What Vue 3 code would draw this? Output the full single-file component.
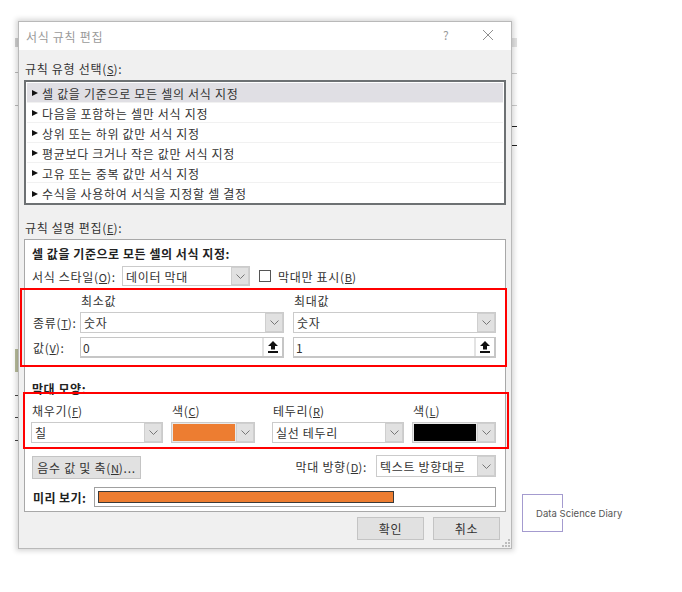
<script setup>
const rules = [
  '셀 값을 기준으로 모든 셀의 서식 지정',
  '다음을 포함하는 셀만 서식 지정',
  '상위 또는 하위 값만 서식 지정',
  '평균보다 크거나 작은 값만 서식 지정',
  '고유 또는 중복 값만 서식 지정',
  '수식을 사용하여 서식을 지정할 셀 결정'
]
const ticks = [395, 417, 440]
</script>

<template>
  <div class="page">
    <i class="bg bg-l1"></i><i class="bg bg-l2"></i><i class="bg bg-l3"></i><i class="bg bg-l4"></i>
    <i class="bg bg-r1"></i><i class="bg bg-r2"></i><i class="bg bg-r3"></i>
    <i class="bg bg-r4"></i><i class="bg bg-r5"></i>
    <i v-for="t in ticks" :key="t" class="tick" :style="{ top: t + 'px' }"></i>

    <div class="dialog">
      <header class="titlebar">
        <span class="title">서식 규칙 편집</span>
        <span class="help">?</span>
        <svg class="close" width="12" height="12" viewBox="0 0 12 12">
          <path d="M1 1 L11 11 M11 1 L1 11" stroke="#8f8f8f" stroke-width="1" fill="none" />
        </svg>
      </header>

      <main class="body">
        <div class="label first-label">규칙 유형 선택(<u>S</u>):</div>
        <ul class="rules">
          <li v-for="(r, i) in rules" :key="r" class="rule" :class="{ active: i === 0 }">
            <svg class="tri" width="6" height="6" viewBox="0 0 6 6"><path d="M0 0 L6 3 L0 6 Z" fill="#111" /></svg>
            <span class="rule-text">{{ r }}</span>
          </li>
        </ul>

        <div class="label second-label">규칙 설명 편집(<u>E</u>):</div>
        <section class="group">
          <div class="heading head-a">셀 값을 기준으로 모든 셀의 서식 지정:</div>
          <div class="style-row">
            <span class="style-label">서식 스타일(<u>O</u>):</span>
            <div class="combo style-combo">
              <span class="combo-text">데이터 막대</span>
              <span class="combo-btn"><svg width="9" height="5" viewBox="0 0 9 5"><path d="M0.5 0.5 L4.5 4.5 L8.5 0.5" fill="none" stroke="#777" /></svg></span>
            </div>
            <span class="check"></span>
            <span class="check-label">막대만 표시(<u>B</u>)</span>
          </div>

          <div class="red red-a">
            <span></span>
            <span class="field-title">최소값</span>
            <span class="field-title">최대값</span>

            <span class="field-label">종류(<u>T</u>):</span>
            <div class="combo"><span class="combo-text">숫자</span><span class="combo-btn"><svg width="9" height="5" viewBox="0 0 9 5"><path d="M0.5 0.5 L4.5 4.5 L8.5 0.5" fill="none" stroke="#777" /></svg></span></div>
            <div class="combo"><span class="combo-text">숫자</span><span class="combo-btn"><svg width="9" height="5" viewBox="0 0 9 5"><path d="M0.5 0.5 L4.5 4.5 L8.5 0.5" fill="none" stroke="#777" /></svg></span></div>

            <span class="field-label">값(<u>V</u>):</span>
            <div class="input"><span class="input-text">0</span><span class="picker"><svg width="10" height="12" viewBox="0 0 10 12"><path d="M5 0 L10 5 L7 5 L7 8.5 L3 8.5 L3 5 L0 5 Z M0 10 H10 V12 H0 Z" fill="#111" /></svg></span></div>
            <div class="input"><span class="input-text">1</span><span class="picker"><svg width="10" height="12" viewBox="0 0 10 12"><path d="M5 0 L10 5 L7 5 L7 8.5 L3 8.5 L3 5 L0 5 Z M0 10 H10 V12 H0 Z" fill="#111" /></svg></span></div>
          </div>

          <div class="heading head-b">막대 모양:</div>
          <div class="red red-b">
            <span class="bar-title">채우기(<u>F</u>)</span>
            <span class="bar-title">색(<u>C</u>)</span>
            <span class="bar-title">테두리(<u>R</u>)</span>
            <span class="bar-title">색(<u>L</u>)</span>

            <div class="combo"><span class="combo-text">칠</span><span class="combo-btn"><svg width="9" height="5" viewBox="0 0 9 5"><path d="M0.5 0.5 L4.5 4.5 L8.5 0.5" fill="none" stroke="#777" /></svg></span></div>
            <div class="combo swatch-combo"><span class="swatch orange"></span><span class="combo-btn"><svg width="9" height="5" viewBox="0 0 9 5"><path d="M0.5 0.5 L4.5 4.5 L8.5 0.5" fill="none" stroke="#777" /></svg></span></div>
            <div class="combo"><span class="combo-text">실선 테두리</span><span class="combo-btn"><svg width="9" height="5" viewBox="0 0 9 5"><path d="M0.5 0.5 L4.5 4.5 L8.5 0.5" fill="none" stroke="#777" /></svg></span></div>
            <div class="combo swatch-combo"><span class="swatch black"></span><span class="combo-btn"><svg width="9" height="5" viewBox="0 0 9 5"><path d="M0.5 0.5 L4.5 4.5 L8.5 0.5" fill="none" stroke="#777" /></svg></span></div>
          </div>

          <div class="neg-row">
            <button class="btn neg-btn">음수 값 및 축(<u>N</u>)...</button>
            <div class="dir">
              <span class="dir-label">막대 방향(<u>D</u>):</span>
              <div class="combo dir-combo"><span class="combo-text">텍스트 방향대로</span><span class="combo-btn"><svg width="9" height="5" viewBox="0 0 9 5"><path d="M0.5 0.5 L4.5 4.5 L8.5 0.5" fill="none" stroke="#777" /></svg></span></div>
            </div>
          </div>

          <div class="preview-row">
            <span class="preview-label">미리 보기:</span>
            <div class="preview"><div class="preview-bar"></div></div>
          </div>
        </section>

        <footer class="footer">
          <button class="btn foot-btn">확인</button>
          <button class="btn foot-btn">취소</button>
        </footer>
      </main>

      <svg class="grip" width="9" height="9" viewBox="0 0 9 9">
        <path d="M7 1h2v2H7zM4 4h2v2H4zM7 4h2v2H7zM1 7h2v2H1zM4 7h2v2H4zM7 7h2v2H7z" fill="#bdbdbd" />
      </svg>
    </div>

    <div class="logo">
      <span class="logo-box"></span>
      <span class="logo-text">Data Science Diary</span>
    </div>
  </div>
</template>

<style>
html, body { margin: 0; background: #fff; }
</style>

<style scoped>
.page {
  position: relative;
  width: 682px;
  height: 592px;
  overflow: hidden;
  padding: 21px 0 0 18px;
  box-sizing: border-box;
  background: #fff;
  font-family: "Noto Sans CJK KR", "Noto Sans", sans-serif;
  font-size: 12px;
  letter-spacing: 0.7px;
  color: #333;
}
.bg { position: absolute; display: block; }
.bg-l1 { left: 15px; top: 38px; width: 3px; height: 9px; background: #cfcfcf; }
.bg-l2 { left: 15px; top: 72px; width: 3px; height: 1px; background: #bbb; }
.bg-l3 { left: 15px; top: 105px; width: 3px; height: 1px; background: #bbb; }
.bg-l4 { left: 15px; top: 349px; width: 3px; height: 23px; background: #b9bd9c; }
.bg-r1 { left: 512px; top: 38px; width: 5px; height: 9px; background: #e3e3e3; }
.bg-r2 { left: 512px; top: 73px; width: 5px; height: 1px; background: #ccc; }
.bg-r3 { left: 512px; top: 105px; width: 5px; height: 1px; background: #ccc; }
.bg-r4 { left: 512px; top: 126px; width: 5px; height: 1px; background: #222; }
.bg-r5 { left: 512px; top: 145px; width: 5px; height: 1px; background: #222; }
.tick { position: absolute; left: 15px; width: 3px; height: 1px; background: #444; }

.dialog {
  position: relative;
  width: 494px;
  height: 528px;
  box-sizing: border-box;
  border: 1px solid #b9b9b9;
  background: #f0f0f0;
  box-shadow: 0 0 5px 2px rgba(0, 0, 0, 0.16);
}
.titlebar {
  position: relative;
  display: flex;
  align-items: center;
  height: 28px;
  background: #fff;
  padding-left: 7px;
}
.title { color: #9a9a9a; }
.help { position: absolute; left: 424px; top: 5px; color: #9a9a9a; line-height: 16px; }
.close { position: absolute; left: 463px; top: 7px; }

.body { display: flex; flex-direction: column; padding: 0 5px; }
.label { height: 16px; line-height: 16px; padding-left: 1px; color: #333; }
.first-label { margin-top: 11px; }
.second-label { margin-top: 15px; }
u { text-underline-offset: 1px; font-size: 11px; letter-spacing: 0; }

.rules {
  list-style: none;
  margin: 3px 0 0;
  padding: 1px;
  width: 482px;
  height: 125px;
  box-sizing: border-box;
  border: 2px solid #6d7173;
  background: #fff;
}
.rule {
  display: flex;
  align-items: center;
  gap: 4px;
  height: 20px;
  padding-left: 5px;
  box-sizing: border-box;
  border-bottom: 1px solid #f1f1f1;
}
.rule:last-child { border-bottom: 0; }
.rule.active { background: #e0dfe4; }
.rule-text { padding-top: 1px; }
.tri { flex: none; margin-top: 1px; }

.group {
  margin-top: 3px;
  width: 482px;
  height: 273px;
  box-sizing: border-box;
  border: 1px solid #a8a8a8;
  background: #fff;
  display: flex;
  flex-direction: column;
}
.heading {
  height: 16px;
  line-height: 16px;
  padding-left: 7px;
  font-weight: 700;
  color: #222;
  letter-spacing: 0.55px;
}
.head-a { margin-top: 6px; }
.head-b { margin-top: 14px; }
.style-row {
  display: flex;
  align-items: center;
  height: 20px;
  margin-top: 4px;
  padding-left: 7px;
}
.style-label { width: 90px; white-space: nowrap; }
.style-combo { width: 128px; height: 20px; }
.check {
  width: 12px;
  height: 12px;
  margin-left: 9px;
  border: 1px solid #555;
  background: #fff;
  box-sizing: border-box;
}
.check-label { margin-left: 7px; }

.combo, .input {
  display: flex;
  align-items: stretch;
  box-sizing: border-box;
  border: 1px solid #cbcbcb;
  background: #fff;
  min-width: 0;
}
.combo-text, .input-text {
  flex: 1;
  padding-left: 3px;
  display: flex;
  align-items: center;
  white-space: nowrap;
  overflow: hidden;
}
.input-text { padding-left: 2px; }
.combo-btn {
  flex: none;
  width: 16px;
  display: flex;
  align-items: center;
  justify-content: center;
  background: #e1e1e1;
  border: 1px solid #cfcfcf;
}
.input { border-right-width: 2px; border-bottom-width: 2px; border-color: #c6c6c6; }
.picker {
  flex: none;
  width: 18px;
  display: flex;
  align-items: center;
  justify-content: center;
  background: #fff;
  border-left: 2px solid #e3e3e3;
}

.red { box-sizing: border-box; border: 2px solid #f00; position: relative; }
.red-a {
  margin: 2px 0 0 -5px;
  width: 487px;
  height: 79px;
  display: grid;
  grid-template-columns: 38px 204px 203px;
  grid-template-rows: 14px 21px 21px;
  column-gap: 9px;
  row-gap: 4px;
  padding: 4px 0 0 11px;
}
.field-title { line-height: 14px; padding-left: 1px; }
.field-label { display: flex; align-items: center; white-space: nowrap; }

.red-b {
  margin: -5px 0 0 -2px;
  width: 486px;
  height: 57px;
  display: grid;
  grid-template-columns: 140px 101px 140px 84px;
  grid-template-rows: 14px 21px;
  row-gap: 4px;
  padding: 10px 0 0 6px;
}
.red-b > .combo:nth-child(5), .red-b > .combo:nth-child(7) { width: 132px; }
.red-b > .combo:nth-child(6) { width: 84px; }
.bar-title { line-height: 14px; padding-left: 1px; white-space: nowrap; }
.swatch-combo { background: #e9e9e9; }
.swatch { flex: 1; margin: 1px; }
.orange { background: #ed7d31; }
.black { background: #000; }

.neg-row {
  margin-top: 6px;
  height: 24px;
  display: flex;
  justify-content: space-between;
  padding: 0 9px 0 7px;
}
.btn {
  font: inherit;
  letter-spacing: inherit;
  color: #333;
  background: #e1e1e1;
  border: 1px solid #c4c4c4;
  padding: 0;
  box-sizing: border-box;
  white-space: nowrap;
}
.neg-btn { width: 109px; height: 23px; margin-top: 1px; }
.dir { display: flex; align-items: flex-start; gap: 9px; }
.dir-label { line-height: 24px; white-space: nowrap; }
.dir-combo { width: 120px; height: 22px; }

.preview-row {
  margin-top: 8px;
  display: flex;
  align-items: center;
  padding-left: 8px;
}
.preview-label { width: 61px; font-weight: 700; color: #222; letter-spacing: 0.4px; white-space: nowrap; }
.preview {
  width: 402px;
  height: 20px;
  box-sizing: border-box;
  border: 1px solid #a0a0a0;
  padding: 3px;
  background: #fff;
}
.preview-bar {
  width: 296px;
  height: 100%;
  box-sizing: border-box;
  border: 1px solid #3a3a3a;
  background: #ed7d31;
}

.footer {
  margin-top: 5px;
  padding-right: 6px;
  display: flex;
  justify-content: flex-end;
  gap: 9px;
}
.foot-btn { width: 67px; height: 23px; }
.grip { position: absolute; right: 1px; bottom: 1px; }

.logo {
  position: absolute;
  left: 522px;
  top: 494px;
  width: 110px;
  height: 38px;
  display: flex;
  align-items: center;
}
.logo-box {
  position: absolute;
  left: 0;
  top: 0;
  width: 41px;
  height: 38px;
  box-sizing: border-box;
  border: 1px solid #a49bcf;
}
.logo-text {
  position: relative;
  margin-left: 13px;
  padding: 0 1px;
  background: #fff;
  font-family: "Inter", sans-serif;
  font-size: 9.5px;
  letter-spacing: 0.05px;
  color: #555;
  white-space: nowrap;
}
</style>
